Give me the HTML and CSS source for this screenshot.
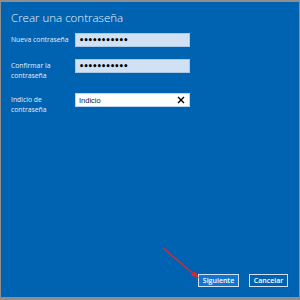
FILE: index.html
```html
<!DOCTYPE html>
<html lang="es">
<head>
    <meta charset="UTF-8">
    <meta name="viewport" content="width=device-width, initial-scale=1.0">
    <title>Crear una contraseña</title>
    <link rel="stylesheet" href="styles.css">
</head>
<body>
    <div class="dialog">
        <h1 class="title">Crear una contraseña</h1>

        <div class="form">
            <label class="label" for="pw1">Nueva contraseña</label>
            <div class="field filled" id="pw1">•••••••••••</div>

            <label class="label" for="pw2">Confirmar la contraseña</label>
            <div class="field filled" id="pw2">•••••••••••</div>

            <label class="label" for="hint">Indicio de contraseña</label>
            <div class="field hint" id="hint">
                <span>Indicio</span>
                <svg class="clear" width="8" height="8" viewBox="0 0 8 8">
                    <path d="M1 1 L7 7 M7 1 L1 7" stroke="#000" stroke-width="1.4" fill="none"/>
                </svg>
            </div>
        </div>

        <div class="actions">
            <button class="btn primary">Siguiente</button>
            <button class="btn">Cancelar</button>
        </div>

        <!-- annotation arrow pointing at the next button -->
        <svg class="arrow" width="50" height="40" viewBox="0 0 50 40">
            <line x1="2" y1="2" x2="35" y2="30" stroke="#e3262b" stroke-width="1.3"/>
            <path d="M38 32 L30 29.5 L33.5 25.5 Z" fill="#e3262b"/>
        </svg>
    </div>
</body>
</html>
```

FILE: styles.css
```css
body {
    margin: 0;
    background-color: #8e8e8e;
    font-family: 'Open Sans', 'Noto Sans', sans-serif;
    color: #fff;
}

.dialog {
    position: relative;
    box-sizing: border-box;
    height: 295px;
    margin: 2px 1px 3px 1px;
    padding: 8px 11px 10px 10px;
    background-color: #0063b1;
    display: flex;
    flex-direction: column;
}

.title {
    margin: 0;
    font-size: 11.5px;
    line-height: 16px;
    font-weight: 300;
    color: #eef4fa;
}

.form {
    margin-top: 7px;
    display: grid;
    grid-template-columns: 64px 115px;
    row-gap: 12px;
    align-items: start;
}

.label {
    padding-top: 2px;
    width: 62px;
    font-size: 6.8px;
    line-height: 10px;
    color: #e4eef8;
}

.field {
    box-sizing: border-box;
    height: 14px;
    padding: 0 3px;
    display: flex;
    align-items: center;
    font-size: 7px;
    color: #000;
}

.filled {
    background-color: #cfe1f2;
    border: 1px solid #a9c9e8;
    font-family: 'DejaVu Sans', sans-serif;
    font-size: 8px;
    font-weight: bold;
    letter-spacing: -0.7px;
}

.hint {
    background-color: #fff;
    border: 1px solid #bcd5ee;
    justify-content: space-between;
    font-family: 'Liberation Sans', sans-serif;
    font-size: 7.5px;
    color: #222;
}

.clear {
    margin-right: 1px;
}

.actions {
    margin-top: auto;
    display: flex;
    justify-content: flex-end;
    gap: 10px;
}

.btn {
    box-sizing: border-box;
    height: 13px;
    padding: 0;
    border: 1px solid #cfe0f0;
    background-color: #0063b1;
    color: #fff;
    font-family: 'Open Sans', sans-serif;
    font-size: 7px;
    font-weight: 600;
    line-height: 11px;
    width: 39px;
}

.btn.primary {
    width: 41px;
    background-color: #0a78d4;
}

.arrow {
    position: absolute;
    left: 160px;
    top: 244px;
}
```
